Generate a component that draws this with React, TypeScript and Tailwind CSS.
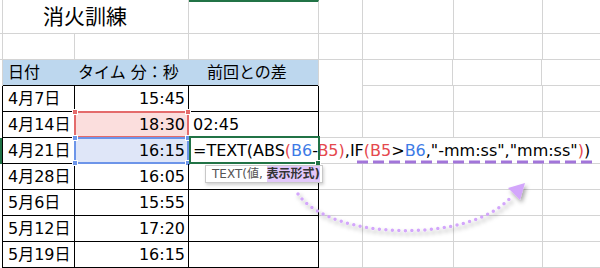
import React from 'react';

const blueRef = 'text-[#3d7be6]';
const redRef = 'text-[#e5484d]';

const rows: { date: string; time: string; diff?: string }[] = [
  { date: '4月7日', time: '15:45' },
  { date: '4月14日', time: '18:30', diff: '02:45' },
  { date: '4月21日', time: '16:15' },
  { date: '4月28日', time: '16:05' },
  { date: '5月6日', time: '15:55' },
  { date: '5月12日', time: '17:20' },
  { date: '5月19日', time: '16:15' },
];

const Handle = ({ className }: { className: string }) => (
  <div className={`absolute w-[6px] h-[6px] border border-white ${className}`} />
);

const Formula = () => (
  <span>
    =TEXT(ABS<span className={redRef}>(</span>
    <span className={blueRef}>B6</span>-<span className={redRef}>B5)</span>,IF
    <span className={redRef}>(B5</span>&gt;<span className={blueRef}>B6</span>
    ,"-mm:ss","mm:ss"<span className={redRef}>)</span>)
  </span>
);

// empty gray grid cells to the right of the table
const RightCells = ({ hidden }: { hidden?: boolean }) => (
  <>
    <div className={hidden ? 'w-[44px] border-b border-[#d4d4d4]' : 'w-[44px] border-r border-b border-[#d4d4d4]'} />
    <div className={hidden ? 'w-[91px] border-b border-[#d4d4d4]' : 'w-[91px] border-r border-b border-[#d4d4d4]'} />
    <div className={hidden ? 'w-[89px] border-b border-[#d4d4d4]' : 'w-[89px] border-r border-b border-[#d4d4d4]'} />
    <div className="flex-1 border-b border-[#d4d4d4]" />
  </>
);

export default function App() {
  return (
    <div className="relative w-[600px] h-[268px] overflow-hidden bg-white text-black font-['DejaVu_Sans','Noto_Sans_CJK_JP',sans-serif]">
      {/* row 1: title */}
      <div className="flex h-[34px]">
        <div className="w-[3px] border-r border-b border-[#d4d4d4]" />
        <div className="w-[186px] flex items-center pl-[40px] pt-[1px] text-[21px] leading-none border-r border-b border-[#d4d4d4]">
          消火訓練
        </div>
        <div className="w-[130px] border-t-2 border-t-[#217346] border-r border-b border-[#d4d4d4]" />
        <RightCells />
      </div>

      {/* row 2 */}
      <div className="flex h-[26px]">
        <div className="w-[3px] border-r border-b border-[#d4d4d4]" />
        <div className="w-[72px] border-r border-b border-[#d4d4d4]" />
        <div className="w-[114px] border-r border-b border-[#d4d4d4]" />
        <div className="w-[130px] border-r border-b border-[#d4d4d4]" />
        <RightCells />
      </div>

      {/* header */}
      <div className="flex h-[26px] text-[16px] leading-none">
        <div className="w-[3px] border-r border-[#d4d4d4]" />
        <div className="w-[316px] flex items-center bg-[#bdd7ee] border-b border-black">
          <div className="w-[72px] pl-[5px]">日付</div>
          <div className="w-[114px] pl-[3px]">タイム 分：秒</div>
          <div className="w-[130px] pl-[18px]">前回との差</div>
        </div>
        <div className="w-[44px] border-l border-[#d4d4d4] -ml-px" />
        <div className="w-[91px] border-l border-r border-b border-[#d4d4d4]" />
        <div className="w-[89px] border-r border-b border-[#d4d4d4]" />
        <div className="flex-1 border-b border-[#d4d4d4]" />
      </div>

      {/* data rows */}
      {rows.map((r, i) => (
        <div key={i} className="flex h-[26px] text-[16px] leading-none">
          <div className={i === 2 ? 'w-[3px] border-r border-black bg-[#217346]' : 'w-[3px] border-r border-black'} />
          <div className="w-[72px] flex items-center pl-[5px] pt-[1px] border-r border-b border-black">{r.date}</div>
          <div
            className={
              i === 1
                ? 'relative w-[114px] flex items-center justify-end pr-[3px] pt-[1px] border-r border-b border-black bg-[#fbdedd]'
                : i === 2
                ? 'relative w-[114px] flex items-center justify-end pr-[3px] pt-[1px] border-r border-b border-black bg-[#dfe6f8]'
                : 'relative w-[114px] flex items-center justify-end pr-[3px] pt-[1px] border-r border-b border-black'
            }
          >
            {r.time}
            {i === 1 && (
              <>
                <div className="absolute -left-[1px] -top-[1px] w-[115px] h-[27px] border-2 border-[#e46b6b]" />
                <Handle className="-left-[3px] -top-[3px] bg-[#e46b6b]" />
                <Handle className="-right-[3px] -top-[3px] bg-[#e46b6b]" />
              </>
            )}
            {i === 2 && (
              <>
                <div className="absolute -left-[1px] -top-[1px] w-[115px] h-[27px] border-2 border-[#6d95e9]" />
                <Handle className="-left-[3px] -top-[3px] bg-[#6d95e9]" />
                <Handle className="-right-[3px] -top-[3px] bg-[#6d95e9]" />
                <Handle className="-left-[3px] -bottom-[3px] bg-[#6d95e9]" />
                <Handle className="-right-[3px] -bottom-[3px] bg-[#6d95e9]" />
              </>
            )}
          </div>
          <div
            className={
              i === 2
                ? 'relative z-10 w-[130px] flex items-center pl-[4px] pt-[1px] whitespace-nowrap border-r border-b border-black'
                : 'w-[130px] flex items-center pl-[4px] pt-[1px] border-r border-b border-black'
            }
          >
            {i === 2 ? <Formula /> : r.diff}
            {i === 2 && (
              <>
                <div className="absolute left-0 -top-[2px] w-[131px] h-[28px] border-2 border-[#217346]" />
                <div className="absolute left-[126px] bottom-[-3px] w-[6px] h-[6px] bg-[#217346] border border-white" />
              </>
            )}
          </div>
          <RightCells hidden={i === 2} />
        </div>
      ))}

      {/* function tooltip */}
      <div className="absolute left-[205px] top-[165px] z-20 h-[18px] w-[118px] flex items-center pl-[6px] bg-white border border-[#c8c8c8] shadow-[1px_2px_3px_rgba(0,0,0,0.18)] text-[12px] leading-none text-[#555] whitespace-nowrap">
        TEXT(値,&nbsp;
        <span className="bg-[#e2c8fb] font-bold text-[#333] py-[2px]">表示形式)</span>
      </div>

      {/* annotations */}
      <svg className="absolute left-0 top-0 z-30 pointer-events-none" width="600" height="268" viewBox="0 0 600 268">
        <defs>
          <filter id="sh" x="-20%" y="-20%" width="140%" height="160%">
            <feDropShadow dx="2" dy="3" stdDeviation="2" floodColor="#000" floodOpacity="0.35" />
          </filter>
        </defs>
        <line x1="357" y1="162" x2="592" y2="162" stroke="#a275da" strokeWidth="3" strokeDasharray="11 5" />
        <g filter="url(#sh)">
          <path
            d="M298 194 C 330 240, 470 245, 512 196"
            fill="none"
            stroke="#d3a6fb"
            strokeWidth="3.5"
            strokeLinecap="round"
            strokeDasharray="0 6.5"
          />
          <polygon points="525,183 508,188 520,200" fill="#d3a6fb" />
        </g>
      </svg>
    </div>
  );
}
